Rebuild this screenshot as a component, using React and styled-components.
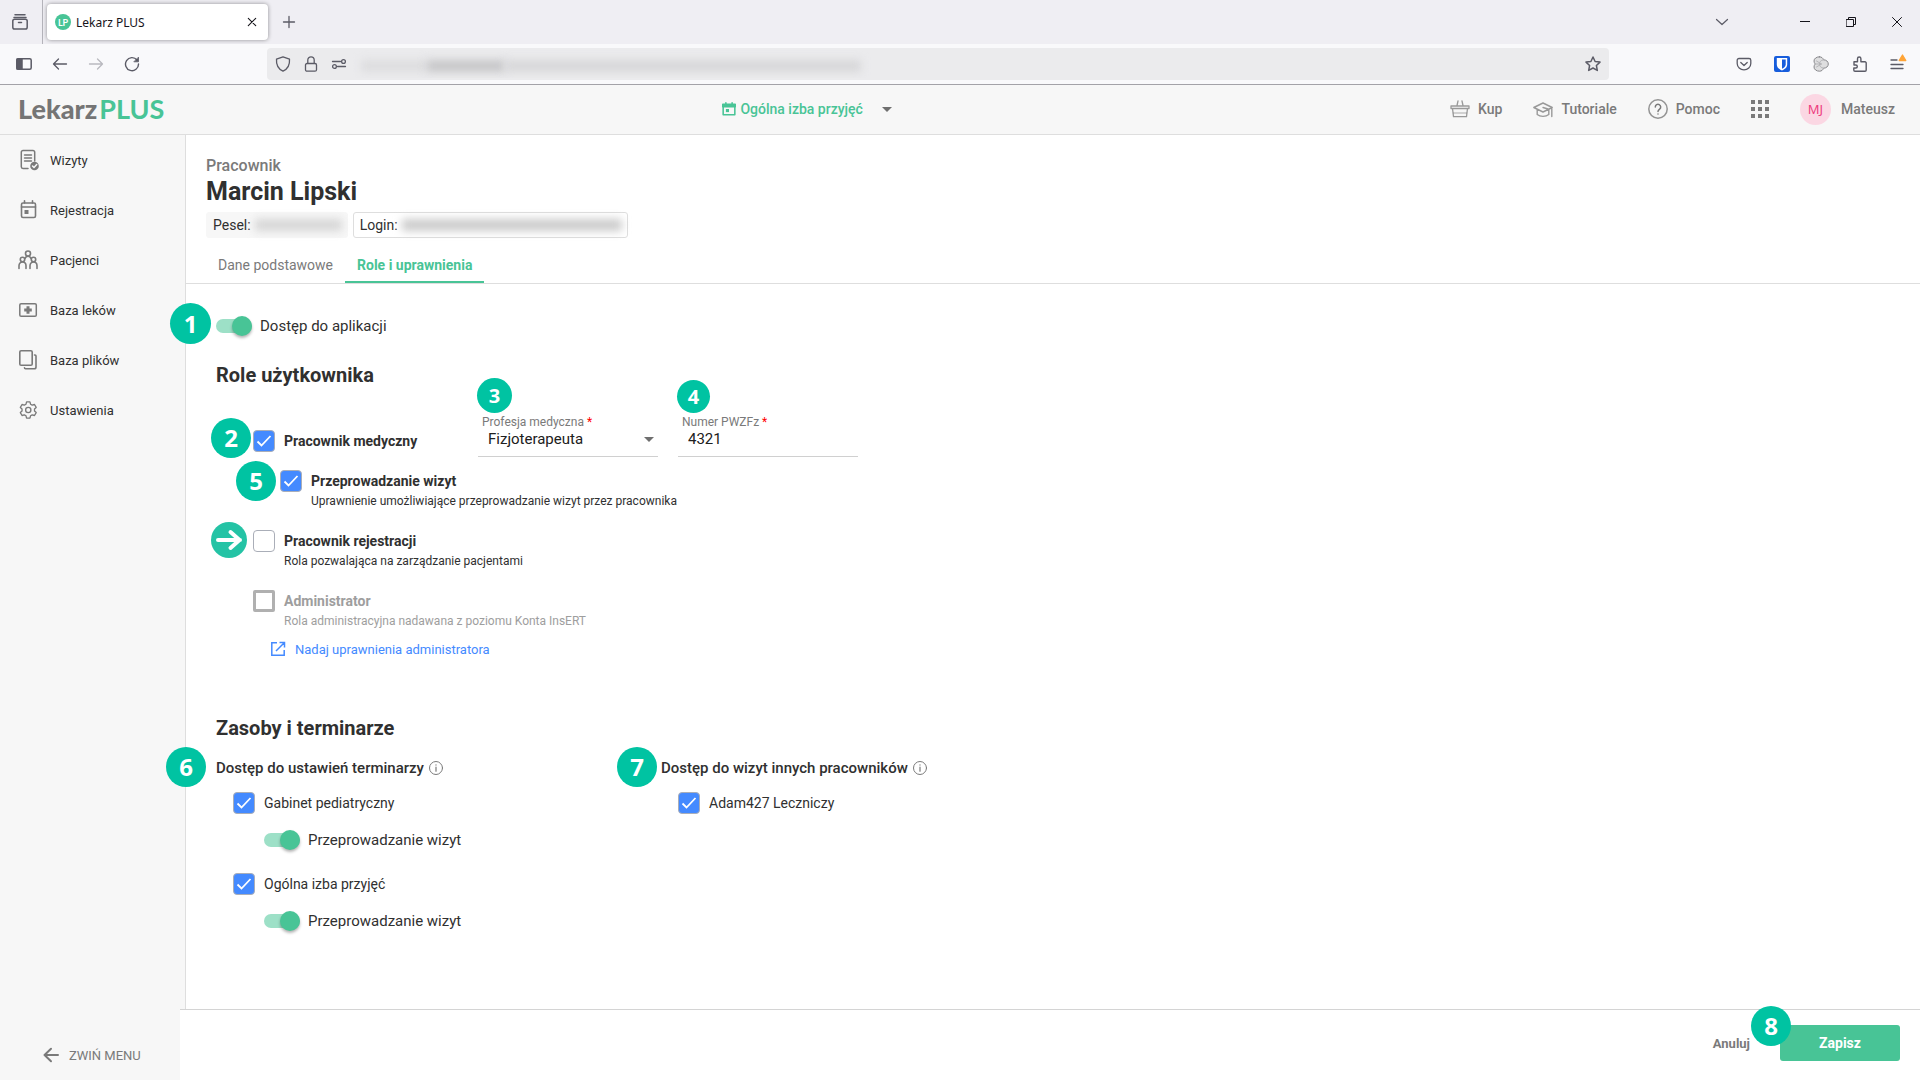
import styled, { createGlobalStyle } from "styled-components"
import { useState } from "react"

const GlobalStyle = createGlobalStyle`
    :root {
        --green: #48c496;
        --badge: #00c3a2;
        --blue: #448aff;
        --grey: #7a7a7a;
        --text: #303030;
        --border-color: #dedede;
        --panel: #f7f7f7;
    }
    * {
        box-sizing: border-box;
    }
    body {
        margin: 0;
        font-family: Roboto, "Liberation Sans", sans-serif;
        font-size: 14px;
        color: var(--text);
        background: #fff;
    }
    button, input, select {
        font-family: inherit;
        margin: 0;
    }
    svg {
        display: block;
        flex: none;
    }
`

const Window = styled.div`
    display: flex;
    flex-direction: column;
    min-height: 100vh;
`

/* browser chrome */

const TabStrip = styled.div`
    display: flex;
    align-items: center;
    height: 44px;
    background: #efeef3;
    color: #5b5b66;
`

const RecentButton = styled.button`
    display: flex;
    align-items: center;
    justify-content: center;
    width: 43px;
    height: 44px;
    padding: 0 3px 0 0;
    border: 0;
    border-right: 1px solid #b4b3ba;
    background: none;
    color: inherit;
`

const BrowserTab = styled.div`
    display: flex;
    align-items: center;
    gap: 5px;
    width: 221px;
    height: 36px;
    margin: 0 12px 0 4px;
    padding: 0 8px;
    border-radius: 4px;
    background: #fff;
    box-shadow: 0 0 4px rgb(0 0 0 / 40%);
    color: #15141a;
    font-family: "Noto Sans", sans-serif;
    font-size: 12px;
`

const Favicon = styled.span`
    display: flex;
    align-items: center;
    justify-content: center;
    width: 16px;
    height: 16px;
    border-radius: 50%;
    background: var(--green);
    color: #fff;
    font-family: Lato, sans-serif;
    font-size: 9px;
    font-weight: 700;
`

const TabTitle = styled.span`
    flex: 1;
`

const IconButton = styled.button`
    display: flex;
    align-items: center;
    justify-content: center;
    width: ${props => props.$width || 36}px;
    height: 32px;
    padding: 0;
    border: 0;
    background: none;
    color: inherit;
    opacity: ${props => props.$faded ? 0.4 : 1};
`

const WindowButtons = styled.div`
    display: flex;
    align-items: center;
    margin-left: auto;
    color: #15141a;
`

const Toolbar = styled.div`
    display: flex;
    align-items: center;
    height: 41px;
    padding: 0 5px 0 6px;
    border-bottom: 1px solid #a3a2a8;
    background: #f9f9fb;
    color: #5b5b66;
`

const AddressBar = styled.div`
    display: flex;
    align-items: center;
    flex: 1;
    height: 32px;
    margin: 0 116px 0 117px;
    padding-left: 2px;
    border-radius: 4px;
    background: #ebebed;
`

const HiddenUrl = styled.div`
    display: flex;
    align-items: center;
    flex: 1;
    height: 28px;
    padding: 4px 0 0 8px;
    overflow: hidden;
`

const Smudge = styled.span`
    width: ${props => props.$width}px;
    height: ${props => props.$height || 12}px;
    background: ${props => props.$color};
    filter: blur(4px);
`

/* application header */

const AppHeader = styled.header`
    display: flex;
    align-items: center;
    justify-content: space-between;
    height: 50px;
    padding: 0 25px 1px 18px;
    border-bottom: 1px solid var(--border-color);
    background: var(--panel);
    color: var(--grey);
`

const Logo = styled.a`
    display: flex;
    gap: 2px;
    color: #757575;
    font-family: Lato, sans-serif;
    font-size: 27px;
    font-weight: 900;
    line-height: 30px;
    text-decoration: none;
`

const LogoAccent = styled.span`
    color: var(--green);
    font-weight: 700;
`

const PlaceButton = styled.button`
    display: flex;
    align-items: center;
    gap: 4px;
    padding: 0;
    border: 0;
    background: none;
    color: var(--green);
    font-size: 14px;
    font-weight: 500;
`

const Caret = styled.span`
    width: 0;
    height: 0;
    margin-left: ${props => props.$gap || 0}px;
    border: 5px solid transparent;
    border-top-color: #6f6f6f;
    border-bottom: 0;
`

const HeaderActions = styled.nav`
    display: flex;
    align-items: center;
    gap: 31px;
`

const HeaderLink = styled.a`
    display: flex;
    align-items: center;
    gap: ${props => props.$gap || 8}px;
    color: inherit;
    font-size: 14px;
    font-weight: 500;
    text-decoration: none;
`

const Avatar = styled.span`
    display: flex;
    align-items: center;
    justify-content: center;
    width: 31px;
    height: 31px;
    border-radius: 50%;
    background: #fbd7e3;
    color: #ee3d7f;
    font-family: "Noto Sans", sans-serif;
    font-size: 13px;
    font-weight: 400;
`

/* side menu */

const Layout = styled.div`
    display: flex;
    flex: 1;
`

const Sidebar = styled.aside`
    display: flex;
    flex-direction: column;
    justify-content: space-between;
    width: 180px;
    background: var(--panel);
`

const Menu = styled.nav`
    display: flex;
    flex-direction: column;
`

const MenuItem = styled.a`
    display: flex;
    align-items: center;
    gap: 10px;
    height: 50px;
    padding-left: 18px;
    color: var(--text);
    font-size: 13px;
    text-decoration: none;
    svg {
        color: var(--grey);
    }
`

const CollapseButton = styled.button`
    display: flex;
    align-items: center;
    gap: 10px;
    height: 50px;
    padding: 0 0 0 43px;
    border: 0;
    background: none;
    color: var(--grey);
    font-size: 13px;
`

const MainColumn = styled.div`
    display: flex;
    flex-direction: column;
    flex: 1;
`

const ContentFrame = styled.div`
    display: flex;
    flex: 1;
    padding-left: 5px;
    background: var(--panel);
`

const Content = styled.main`
    flex: 1;
    border-left: 1px solid var(--border-color);
    background: #fff;
`

const PageHead = styled.div`
    padding: 21px 20px 0;
    border-bottom: 1px solid var(--border-color);
`

const Kicker = styled.div`
    color: var(--grey);
    font-size: 16px;
    font-weight: 500;
    line-height: 20px;
`

const PageTitle = styled.h1`
    margin: 2px 0 6px;
    font-size: 25px;
    font-weight: 700;
    line-height: 28px;
`

const Chips = styled.div`
    display: flex;
    gap: 5px;
`

const Chip = styled.div`
    display: flex;
    align-items: center;
    gap: 4px;
    height: 26px;
    padding: 0 5px 0 6px;
    border: 1px solid ${props => props.$outlined ? "var(--border-color)" : "var(--panel)"};
    border-radius: 3px;
    background: ${props => props.$outlined ? "#fff" : "var(--panel)"};
    font-size: 14px;
`

const Tabs = styled.div`
    display: flex;
    margin-top: 8px;
`

const Tab = styled.button`
    height: 37px;
    padding: 2px 12px 0;
    border: 0;
    border-bottom: 2px solid ${props => props.$active ? "var(--green)" : "transparent"};
    background: none;
    color: ${props => props.$active ? "var(--green)" : "var(--grey)"};
    font-size: 14px;
    font-weight: ${props => props.$active ? 700 : 400};
`

/* form */

const Form = styled.form`
    padding: 30px 30px 40px;
`

const SectionTitle = styled.h2`
    margin: ${props => props.$top}px 0 0;
    font-size: 20px;
    font-weight: 700;
    line-height: 28px;
`

const ToggleLabel = styled.label`
    position: relative;
    display: flex;
    align-items: center;
    gap: 8px;
    width: max-content;
    height: 24px;
    font-size: 15px;
`

const ToggleInput = styled.input`
    position: relative;
    appearance: none;
    width: 36px;
    height: 14px;
    border-radius: 7px;
    background: ${props => props.checked ? "#9de0c7" : "#bbb"};
    &::before {
        content: "";
        position: absolute;
        top: -3px;
        left: ${props => props.checked ? 16 : 0}px;
        width: 20px;
        height: 20px;
        border-radius: 50%;
        background: ${props => props.checked ? "var(--green)" : "#fafafa"};
        box-shadow: 0 2px 3px rgb(0 0 0 / 30%);
    }
`

const CheckWrapper = styled.span`
    display: grid;
    width: 22px;
    height: 22px;
    > * {
        grid-area: 1 / 1;
    }
    svg {
        pointer-events: none;
    }
`

const CheckInput = styled.input`
    appearance: none;
    width: 22px;
    height: 22px;
    border: 1px solid #aaaeb8;
    border-radius: 4px;
    background: ${props => props.checked ? "var(--blue)" : "#fff"};
    &:disabled {
        border: 3px solid #b0b0b0;
        border-radius: 2px;
    }
`

const Roles = styled.div`
    padding-left: 37px;
`

const RoleRow = styled.div`
    position: relative;
    display: flex;
    align-items: flex-start;
    margin: 24px 0 13px;
`

const Role = styled.label`
    position: relative;
    display: grid;
    grid-template-columns: 22px auto;
    column-gap: 9px;
    width: max-content;
    margin: 0 0 20px ${props => props.$indent || 0}px;
    color: ${props => props.$disabled ? "#9e9e9e" : "var(--text)"};
`

const MainRole = styled(Role)`
    width: 225px;
    margin: 17px 0 0;
`

const RoleName = styled.span`
    font-size: 14px;
    font-weight: 700;
    line-height: 22px;
`

const RoleHint = styled.span`
    grid-column: 2;
    font-size: 12px;
    line-height: 18px;
`

const Field = styled.div`
    position: relative;
    display: flex;
    flex-direction: column;
    width: 180px;
    height: 44px;
    margin-right: 20px;
    border-bottom: 1px solid #d0d0d0;
`

const FieldLabel = styled.label`
    padding-left: 4px;
    color: var(--grey);
    font-size: 12px;
    line-height: 18px;
`

const Required = styled.span`
    color: #f00;
`

const FieldBox = styled.div`
    display: flex;
    align-items: center;
    padding-right: 4px;
`

const control = `
    flex: 1;
    min-width: 0;
    height: 16px;
    padding: 0 0 0 10px;
    border: 0;
    outline: 0;
    appearance: none;
    background: none;
    color: #202020;
    font-size: 15px;
    line-height: 16px;
    overflow: visible;
`

const Select = styled.select`${control}`
const TextInput = styled.input`${control}`

const AdminLink = styled.a`
    display: flex;
    align-items: center;
    gap: 8px;
    width: max-content;
    height: 18px;
    margin: -10px 0 0 16px;
    color: var(--blue);
    font-size: 13px;
    text-decoration: none;
`

const Columns = styled.div`
    display: flex;
    margin-top: 15px;
`

const Column = styled.section`
    position: relative;
    min-width: 445px;
`

const ColumnTitle = styled.h3`
    display: flex;
    align-items: center;
    gap: 5px;
    margin: 0;
    font-size: 15px;
    font-weight: 500;
    line-height: 22px;
    svg {
        color: var(--grey);
    }
`

const Resource = styled.div`
    margin: 13px 0 21px 17px;
`

const ResourceLabel = styled.label`
    display: flex;
    align-items: center;
    gap: 9px;
    width: max-content;
    margin-bottom: 14px;
    font-size: 14px;
`

const Indented = styled.div`
    padding-left: 31px;
`

const Footer = styled.footer`
    display: flex;
    align-items: center;
    justify-content: flex-end;
    gap: 30px;
    height: 71px;
    padding: 0 20px 4px 0;
    border-top: 1px solid #d4d4d4;
    background: #fff;
`

const CancelButton = styled.button`
    padding: 0;
    border: 0;
    background: none;
    color: var(--grey);
    font-size: 13px;
    font-weight: 700;
`

const SaveWrapper = styled.div`
    position: relative;
`

const SaveButton = styled.button`
    width: 120px;
    height: 36px;
    border: 0;
    border-radius: 3px;
    background: var(--green);
    color: #fff;
    font-size: 14px;
    font-weight: 700;
`

/* numbered markers lie over the form */
const Marker = styled.span`
    position: absolute;
    top: ${props => props.$top}px;
    left: ${props => props.$left}px;
    display: flex;
    align-items: center;
    justify-content: center;
    width: ${props => props.$size || 40}px;
    height: ${props => props.$size || 40}px;
    border-radius: 50%;
    background: ${props => props.$color || "var(--badge)"};
    color: #fff;
    font-family: "Open Sans", sans-serif;
    font-size: ${props => props.$small ? 20 : 24}px;
    font-weight: 700;
    line-height: 1;
`

function Icon({ size = 16, box, width = 1.3, children }) {
    return (
        <svg width={size} height={size} viewBox={`0 0 ${box || size} ${box || size}`} fill="none" stroke="currentColor"
            strokeWidth={width} strokeLinecap="round" strokeLinejoin="round" aria-hidden="true">
            {children}
        </svg>
    )
}

const menuIcons = {
    visits: (
        <Icon size={22} width={1.5}>
            <path d="M10 19.500H5A1.700 1.700 0 0 1 3.300 17.800V3.200A1.700 1.700 0 0 1 5 1.500h10a1.700 1.700 0 0 1 1.700 1.700V12M6.500 6h7M6.500 9h7M6.500 12h7" />
            <circle cx="16.500" cy="17" r="4.300" fill="currentColor" stroke="none" />
            <path d="m14.500 17 1.500 1.500 2.700-2.900" stroke="#f7f7f7" />
        </Icon>
    ),
    calendar: (
        <Icon size={22} width={1.6}>
            <rect x="3.500" y="4" width="14" height="14.500" rx="1.500" />
            <path d="M3.500 8h14M6.500 1.800V4M14.500 1.800V4" />
            <path d="M6.500 11h4v4h-4z" fill="currentColor" stroke="none" />
        </Icon>
    ),
    patients: (
        <Icon size={22} width={1.6}>
            <circle cx="10" cy="4.500" r="2.500" />
            <circle cx="4.500" cy="10.500" r="2.200" />
            <circle cx="15.500" cy="10.500" r="2.200" />
            <path d="M1 19.500v-2.800c0-2.200 1.500-3.700 3.500-3.700S8 14.500 8 16.700v2.800M12 19.500v-2.800c0-2.200 1.500-3.700 3.500-3.700s3.500 1.500 3.500 3.700v2.800M7 9.500C7.500 8 8.500 7.200 10 7.200s2.500.800 3 2.300" />
        </Icon>
    ),
    drugs: (
        <Icon size={22} width={1.5}>
            <rect x="1.800" y="4.700" width="16.500" height="12.600" rx="1.300" />
            <path d="M10 7.200v7.600M6.200 11h7.600" strokeWidth="3" strokeLinecap="butt" />
        </Icon>
    ),
    files: (
        <Icon size={22} width={1.6}>
            <rect x="1.800" y="1.800" width="12.400" height="14.400" rx="1.300" />
            <path d="M16.500 6H17a1 1 0 0 1 1 1v11a1.800 1.800 0 0 1-1.800 1.800H7.500a1 1 0 0 1-1-1" />
        </Icon>
    ),
    settings: (
        <Icon size={22} box={30} width={1.8}>
            <path d="M11.700 4h4.600l.8 3.100 2.300 1.300 3.100-.9 2.300 4-2.300 2.200v2.600l2.300 2.200-2.300 4-3.100-.9-2.300 1.300-.8 3.100h-4.600l-.8-3.100-2.300-1.300-3.100.9-2.300-4 2.300-2.200v-2.600l-2.300-2.200 2.300-4 3.100.9 2.300-1.300z" />
            <circle cx="14" cy="15" r="3.600" />
        </Icon>
    ),
}

const menu = [
    { name: "Wizyty", icon: "visits" },
    { name: "Rejestracja", icon: "calendar" },
    { name: "Pacjenci", icon: "patients" },
    { name: "Baza leków", icon: "drugs" },
    { name: "Baza plików", icon: "files" },
    { name: "Ustawienia", icon: "settings" },
]

function Browser() {
    return (
        <>
            <TabStrip>
                <RecentButton aria-label="Historia">
                    <Icon width={1.500}>
                        <path d="M3 .8h10M2 3.500h12" />
                        <rect x=".8" y="5.300" width="14.400" height="9.700" rx="1.800" />
                        <path d="M6.500 8.500h3" />
                    </Icon>
                </RecentButton>
                <BrowserTab>
                    <Favicon>LP</Favicon>
                    <TabTitle>Lekarz PLUS</TabTitle>
                    <IconButton $width={16} aria-label="Zamknij kartę">
                        <Icon width={1.100}><path d="m4.300 4.300 7.400 7.400M11.700 4.300l-7.400 7.400" /></Icon>
                    </IconButton>
                </BrowserTab>
                <IconButton $width={18} aria-label="Nowa karta">
                    <Icon><path d="M8 2.500v11M2.500 8h11" /></Icon>
                </IconButton>
                <WindowButtons>
                    <IconButton $width={120} aria-label="Lista kart">
                        <Icon width={1.200}><path d="m2.500 5.500 5.500 5 5.500-5" stroke="#5b5b66" /></Icon>
                    </IconButton>
                    <IconButton $width={46} aria-label="Minimalizuj">
                        <Icon size={10} width={1}><path d="M0 4.500h10" strokeLinecap="butt" /></Icon>
                    </IconButton>
                    <IconButton $width={46} aria-label="Przywróć">
                        <Icon size={10} width={1}>
                            <path d="M.5 2.500h7v7h-7zM2.500 2.500v-2h7v7h-2" />
                        </Icon>
                    </IconButton>
                    <IconButton $width={46} aria-label="Zamknij">
                        <Icon size={10} width={1}><path d="m.5.5 9 9M9.500.5l-9 9" /></Icon>
                    </IconButton>
                </WindowButtons>
            </TabStrip>
            <Toolbar>
                <IconButton aria-label="Panel boczny">
                    <Icon width={1.500}>
                        <rect x=".8" y="2.800" width="14.400" height="10.400" rx="1.500" />
                        <path d="M1 3h5v10H1z" fill="currentColor" />
                    </Icon>
                </IconButton>
                <IconButton aria-label="Wstecz">
                    <Icon><path d="M14.500 8h-13M6.500 3l-5 5 5 5" /></Icon>
                </IconButton>
                <IconButton $faded aria-label="Dalej">
                    <Icon><path d="M1.500 8h13M9.500 3l5 5-5 5" /></Icon>
                </IconButton>
                <IconButton aria-label="Odśwież">
                    <Icon width={1.400}>
                        <path d="M13 4A6.500 6.500 0 1 0 14.500 8" />
                        <path d="M14.500 1.500v4.300h-4.300z" fill="currentColor" strokeWidth=".8" />
                    </Icon>
                </IconButton>
                <AddressBar>
                    <IconButton $width={28} aria-label="Ochrona">
                        <Icon><path d="M8 .8 14.500 3.200c.4 5-1.500 9.500-6.500 12C3 12.700 1.100 8.200 1.500 3.200z" /></Icon>
                    </IconButton>
                    <IconButton $width={28} aria-label="Połączenie">
                        <Icon>
                            <rect x="2.500" y="7.500" width="11" height="7.700" rx="1.500" />
                            <path d="M4.800 7.300V4a3.200 3.200 0 0 1 6.400 0v3.300" />
                        </Icon>
                    </IconButton>
                    <IconButton $width={28} aria-label="Uprawnienia">
                        <Icon>
                            <path d="M1.500 5.500h8M6.500 10.500h8" />
                            <circle cx="12.500" cy="5.500" r="1.900" />
                            <circle cx="3.500" cy="10.500" r="1.900" />
                        </Icon>
                    </IconButton>
                    <HiddenUrl>
                        <Smudge $width={66} $color="#dddddf" />
                        <Smudge $width={78} $color="#c6c6c8" />
                        <Smudge $width={356} $color="#d7d7d9" />
                    </HiddenUrl>
                    <IconButton $width={32} aria-label="Dodaj zakładkę">
                        <Icon width={1.500}>
                            <path d="m8 1 2.100 4.500 4.900.6-3.600 3.400.9 4.900L8 12l-4.300 2.400.9-4.900L1 6.100l4.900-.6z" />
                        </Icon>
                    </IconButton>
                </AddressBar>
                <IconButton $width={38} aria-label="Pocket">
                    <Icon>
                        <path d="M3 2.500h10a1.800 1.800 0 0 1 1.800 1.800V7.500a6.800 6.300 0 0 1-13.600 0V4.300A1.800 1.800 0 0 1 3 2.500zM4.800 6.500 8 9.500l3.200-3" />
                    </Icon>
                </IconButton>
                <IconButton $width={38} aria-label="Bitwarden">
                    <Icon>
                        <rect width="16" height="16" rx="2" fill="#175ddc" stroke="none" />
                        <path d="M2.800 2h10.400v6.500c0 3-2.500 4.800-5.200 6-2.700-1.200-5.200-3-5.200-6z" fill="#fff" stroke="none" />
                        <path d="M8 3.500h3.700v5c0 2-1.700 3.300-3.700 4.300z" fill="#175ddc" stroke="none" />
                    </Icon>
                </IconButton>
                <IconButton $width={40} aria-label="Rozszerzenie">
                    <Icon width={1}>
                        <path d="M6.500.8c2 0 3.500 1.200 4 3 2.800 0 4.800 1.800 4.800 4.200s-2 4.200-4.800 4.200c-.5 1.800-2 3-4 3C3.500 15.200 1 13.500 1 11c0-1.200.5-2.200 1.300-3C1.500 7.200 1 6.200 1 5 1 2.500 3.500.8 6.500.8z" fill="#dededf" stroke="#88888c" />
                        <path d="M10.500 3.800C7.500 4.300 6.500 6 6.500 8s1 3.700 4 4.200M2.300 8h6M3.500 5l5 3-5 3" stroke="#b5b5b8" />
                    </Icon>
                </IconButton>
                <IconButton $width={38} aria-label="Rozszerzenia">
                    <Icon width={1.400}>
                        <path d="M2 5.800h3.500V2.700a1.700 1.700 0 0 1 3.400 0v3.100H13a1.200 1.200 0 0 1 1.200 1.200v7a1.200 1.200 0 0 1-1.200 1.200H3A1.200 1.200 0 0 1 1.800 14v-2h2a1.500 1.500 0 0 0 0-3H2z" />
                    </Icon>
                </IconButton>
                <IconButton aria-label="Menu">
                    <Icon size={20}>
                        <path d="M4 6h6M4 10.500h12M4 14.500h12" />
                        <path d="m15.500 1 3.300 5.500h-6.600z" fill="#ffa436" stroke="#ffa436" />
                    </Icon>
                </IconButton>
            </Toolbar>
        </>
    )
}

function Header() {
    return (
        <AppHeader>
            <Logo href="#">
                <span>Lekarz</span>
                <LogoAccent>PLUS</LogoAccent>
            </Logo>
            <PlaceButton>
                <Icon size={14} box={18} width={2}>
                    <path d="M1.500 3.500h15v13h-15z" />
                    <path d="M1 3h16v3H1zM5 1v2M13 1v2" fill="currentColor" />
                    <path d="M5 9h4v4H5z" fill="currentColor" stroke="none" />
                </Icon>
                Ogólna izba przyjęć
                <Caret $gap={15} />
            </PlaceButton>
            <HeaderActions>
                <HeaderLink href="#">
                    <Icon size={20} width={1.300}>
                        <path d="M1 7h18v2.500H1zM2.500 9.500l1 8.200h13l1-8.200M7 6.500 8 2M13 6.500 12 2" opacity=".75" />
                        <path d="M3.500 14h13" opacity=".4" />
                    </Icon>
                    Kup
                </HeaderLink>
                <HeaderLink href="#">
                    <Icon size={20} width={1.400}>
                        <path d="m10 4 9.200 4.500L10 13 .800 8.500zM4.200 10.500v5c3 2.500 8.600 2.500 11.600 0v-5M18.800 9v8.500M10 8.500l5 1.500" opacity=".75" />
                    </Icon>
                    Tutoriale
                </HeaderLink>
                <HeaderLink href="#">
                    <Icon size={20} width={1.500}>
                        <circle cx="10" cy="10" r="9.200" opacity=".8" />
                        <path d="M7.300 8a2.700 2.700 0 1 1 4.300 2.200c-1.100.8-1.600 1.300-1.600 2.300M10 14.900v.2" />
                    </Icon>
                    Pomoc
                </HeaderLink>
                <HeaderLink href="#" aria-label="Aplikacje">
                    <svg width="18" height="18" viewBox="0 0 18 18" fill="currentColor">
                        {[0, 7, 14].map(y => [0, 7, 14].map(x => <rect key={`${x}-${y}`} x={x} y={y} width="4" height="4" />))}
                    </svg>
                </HeaderLink>
                <HeaderLink href="#" $gap={10}>
                    <Avatar>MJ</Avatar>
                    Mateusz
                </HeaderLink>
            </HeaderActions>
        </AppHeader>
    )
}

function Toggle({ label, children }) {
    const [on, setOn] = useState(true)

    return (
        <ToggleLabel>
            {children}
            <ToggleInput type="checkbox" role="switch" checked={on} onChange={() => setOn(!on)} />
            {label}
        </ToggleLabel>
    )
}

function Check({ initial = true, disabled }) {
    const [on, setOn] = useState(initial)

    return (
        <CheckWrapper>
            <CheckInput type="checkbox" checked={on} disabled={disabled} onChange={() => setOn(!on)} />
            {on ? (
                <svg width="22" height="22" viewBox="0 0 22 22" fill="none" stroke="#fff" strokeWidth="1.800">
                    <path d="m4.500 11.500 4 4 9-9.500" />
                </svg>
            ) : null}
        </CheckWrapper>
    )
}

function InfoIcon() {
    return (
        <Icon size={14} width={1}>
            <circle cx="7" cy="7" r="6.500" />
            <path d="M7 6.200v4M7 3.800v.3" strokeWidth="1.200" />
        </Icon>
    )
}

function RolesForm() {
    const [number, setNumber] = useState("4321")

    return (
        <Form>
            <Toggle label="Dostęp do aplikacji"><Marker $size={41} $top={-11} $left={-46}>1</Marker></Toggle>
            <SectionTitle $top={23}>Role użytkownika</SectionTitle>
            <Roles>
                <RoleRow>
                    <MainRole>
                        <Marker $top={-12} $left={-42}>2</Marker>
                        <Check />
                        <RoleName>Pracownik medyczny</RoleName>
                    </MainRole>
                    <Field>
                        <Marker $size={35} $small $top={-35} $left={-1}>3</Marker>
                        <FieldLabel htmlFor="profession">Profesja medyczna <Required>*</Required></FieldLabel>
                        <FieldBox>
                            <Select id="profession">
                                <option>Fizjoterapeuta</option>
                            </Select>
                            <Caret />
                        </FieldBox>
                    </Field>
                    <Field>
                        <Marker $size={33} $small $top={-33} $left={-1}>4</Marker>
                        <FieldLabel htmlFor="number">Numer PWZFz <Required>*</Required></FieldLabel>
                        <FieldBox>
                            <TextInput id="number" value={number} onChange={e => setNumber(e.target.value)} />
                        </FieldBox>
                    </Field>
                </RoleRow>
                <Role $indent={27}>
                    <Marker $top={-9} $left={-44}>5</Marker>
                    <Check />
                    <RoleName>Przeprowadzanie wizyt</RoleName>
                    <RoleHint>Uprawnienie umożliwiające przeprowadzanie wizyt przez pracownika</RoleHint>
                </Role>
                <Role>
                    <Marker $size={36} $top={-8} $left={-42} $color="#24c3a5">
                        <Icon size={36} width={4}><path d="M7 18h22M19.500 10l9 8-9 8" /></Icon>
                    </Marker>
                    <Check initial={false} />
                    <RoleName>Pracownik rejestracji</RoleName>
                    <RoleHint>Rola pozwalająca na zarządzanie pacjentami</RoleHint>
                </Role>
                <Role $disabled>
                    <Check initial={false} disabled />
                    <RoleName>Administrator</RoleName>
                    <RoleHint>Rola administracyjna nadawana z poziomu Konta InsERT</RoleHint>
                </Role>
                <AdminLink href="#">
                    <Icon size={18} width={1.500}>
                        <path d="M8 2.800H2.800v12.400h12.400V10M10.500 2.500h5v5M15 3l-8 8" strokeLinecap="butt" strokeLinejoin="miter" />
                    </Icon>
                    Nadaj uprawnienia administratora
                </AdminLink>
            </Roles>
            <SectionTitle $top={56}>Zasoby i terminarze</SectionTitle>
            <Columns>
                <Column>
                    <Marker $top={-10} $left={-50}>6</Marker>
                    <ColumnTitle>Dostęp do ustawień terminarzy <InfoIcon /></ColumnTitle>
                    {["Gabinet pediatryczny", "Ogólna izba przyjęć"].map(name => (
                        <Resource key={name}>
                            <ResourceLabel><Check />{name}</ResourceLabel>
                            <Indented><Toggle label="Przeprowadzanie wizyt" /></Indented>
                        </Resource>
                    ))}
                </Column>
                <Column>
                    <Marker $top={-10} $left={-44}>7</Marker>
                    <ColumnTitle>Dostęp do wizyt innych pracowników <InfoIcon /></ColumnTitle>
                    <Resource>
                        <ResourceLabel><Check />Adam427 Leczniczy</ResourceLabel>
                    </Resource>
                </Column>
            </Columns>
        </Form>
    )
}

function App() {
    return (
        <Window>
            <GlobalStyle />
            <Browser />
            <Header />
            <Layout>
                <Sidebar>
                    <Menu>
                        {menu.map(item => (
                            <MenuItem key={item.name} href="#">
                                {menuIcons[item.icon]}
                                {item.name}
                            </MenuItem>
                        ))}
                    </Menu>
                    <CollapseButton>
                        <Icon width={2}><path d="M15 8H1.500M8 1.800 1.500 8 8 14.200" /></Icon>
                        ZWIŃ MENU
                    </CollapseButton>
                </Sidebar>
                <MainColumn>
                    <ContentFrame>
                        <Content>
                            <PageHead>
                                <Kicker>Pracownik</Kicker>
                                <PageTitle>Marcin Lipski</PageTitle>
                                <Chips>
                                    <Chip>Pesel: <Smudge $width={87} $color="#d6d6d6" /></Chip>
                                    <Chip $outlined>Login: <Smudge $width={220} $color="#cbcbcb" /></Chip>
                                </Chips>
                                <Tabs>
                                    <Tab>Dane podstawowe</Tab>
                                    <Tab $active>Role i uprawnienia</Tab>
                                </Tabs>
                            </PageHead>
                            <RolesForm />
                        </Content>
                    </ContentFrame>
                    <Footer>
                        <CancelButton>Anuluj</CancelButton>
                        <SaveWrapper>
                            <SaveButton>Zapisz</SaveButton>
                            <Marker $top={-19} $left={-29}>8</Marker>
                        </SaveWrapper>
                    </Footer>
                </MainColumn>
            </Layout>
        </Window>
    )
}

export default App
